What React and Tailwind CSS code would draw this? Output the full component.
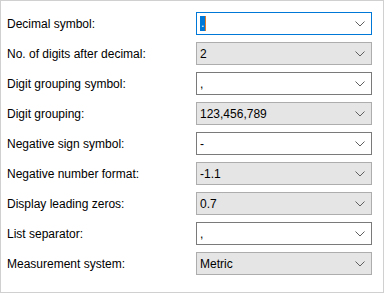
import React from "react";

const rows = [
  { label: "Decimal symbol:", value: ".", kind: "focus" },
  { label: "No. of digits after decimal:", value: "2", kind: "list" },
  { label: "Digit grouping symbol:", value: ",", kind: "edit" },
  { label: "Digit grouping:", value: "123,456,789", kind: "list" },
  { label: "Negative sign symbol:", value: "-", kind: "edit" },
  { label: "Negative number format:", value: "-1.1", kind: "list" },
  { label: "Display leading zeros:", value: "0.7", kind: "list" },
  { label: "List separator:", value: ",", kind: "edit" },
  { label: "Measurement system:", value: "Metric", kind: "list" },
];

const Chevron = () => (
  <svg width="10" height="6" viewBox="0 0 10 6" className="shrink-0">
    <path d="M0.5 0.5 L5 5 L9.5 0.5" fill="none" stroke="#606060" strokeWidth="1" />
  </svg>
);

const Combo = ({ value, kind }) => {
  const styles = {
    focus: "bg-white border-[#0078d7]",
    list: "bg-[#e5e5e5] border-[#adadad]",
    edit: "bg-white border-[#7a7a7a]",
  };
  return (
    <div
      className={`w-[176px] h-[23px] border flex items-center pl-[3px] pr-[6px] ${styles[kind]}`}
    >
      <div className="flex-1 flex items-center">
        {kind === "focus" ? (
          <span className="bg-[#0078d7] text-white leading-[15px] h-[15px] px-[1px] border-r border-[#e07a2a]">
            {value}
          </span>
        ) : (
          <span className="text-black">{value}</span>
        )}
      </div>
      <Chevron />
    </div>
  );
};

export default function App() {
  return (
    <div
      className="w-[384px] h-[293px] bg-white border border-[#d0d0d0] pt-[11px] pl-[6px] flex flex-col gap-[7px] text-[12px] text-black"
      style={{ fontFamily: '"Liberation Sans", Arial, sans-serif' }}
    >
      {rows.map((r) => (
        <div key={r.label} className="flex items-center h-[23px]">
          <div className="w-[189px]">{r.label}</div>
          <Combo value={r.value} kind={r.kind} />
        </div>
      ))}
    </div>
  );
}
